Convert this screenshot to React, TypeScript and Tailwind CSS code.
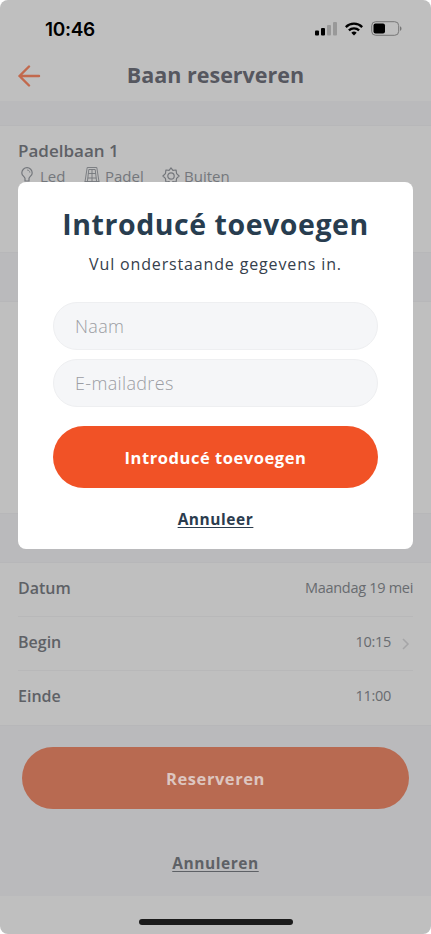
import React from 'react';

const rows = [
  { label: 'Datum', value: 'Maandag 19 mei', inset: false, chevron: false },
  { label: 'Begin', value: '10:15', inset: true, chevron: true },
  { label: 'Einde', value: '11:00', inset: true, chevron: false },
];

function BulbIcon() {
  return (
    <svg className="shrink-0" width="12" height="18" viewBox="0 0 12 18" fill="none" stroke="currentColor" strokeWidth="1.200">
      <path d="M4 14V11.300C3.600 9.600.8 8.700.8 5.900a5.200 5.200 0 0 1 10.400 0C11.200 8.700 8.400 9.600 8 11.300V14zM4 16h4" />
      <path d="M6 3c1.700 0 2.800 1.100 2.900 2.700" strokeWidth=".8" />
    </svg>
  );
}

function CourtIcon() {
  return (
    <svg className="shrink-0" width="16" height="18" viewBox="0 0 16 18" fill="none" stroke="currentColor" strokeWidth=".9">
      <path d="M3.200.5h9.600M3.200.5.8 16M12.800.5 15.200 16M4.800 2.500h6.400M4.800 2.500 3.400 14.500M11.200 2.500l1.400 12M8 2.500v12M4.300 6.500h7.400M3.800 11h8.400M.8 14.500h14.400" />
    </svg>
  );
}

function GearIcon() {
  return (
    <svg className="shrink-0" width="18" height="18" viewBox="0 0 18 18" fill="none" stroke="currentColor" strokeWidth="1.200" strokeLinejoin="round">
      <path d="M9 .9 10.900 3.400 14.100 3 14.600 6.600 17.100 9 14.600 11.400 14.100 15 10.900 14.600 9 17.100 7.100 14.600 3.900 15 3.400 11.400.9 9 3.400 6.600 3.900 3 7.100 3.400z" />
      <circle cx="9" cy="9" r="3.200" />
    </svg>
  );
}

function StatusBar() {
  return (
    <div className="flex h-[57px] items-center justify-between pl-[45px] pr-[29px]">
      <span className="mt-[3px] font-[Inter] text-[19px] font-semibold tracking-[-0.300px] text-black">10:46</span>
      <div className="flex items-center">
        <svg width="22" height="14" viewBox="0 0 22 14">
          <rect x="0" y="8.500" width="4" height="5" rx="1" />
          <rect x="6" y="6" width="4" height="7.500" rx="1" />
          <rect x="12" y="3" width="4" height="10.500" rx="1" fill="#999999" />
          <rect x="18" y="0" width="4" height="13.500" rx="1" fill="#999999" />
        </svg>
        <svg className="ml-2" width="18" height="14" viewBox="0 0 18 14" fill="none" stroke="black" strokeWidth="2.300">
          <path d="M.8 5.100a11.600 11.600 0 0 1 16.400 0M3.900 8.400a7.200 7.200 0 0 1 10.200 0" />
          <path d="M9 13.500 6.300 10.800a3.800 3.800 0 0 1 5.400 0z" fill="black" stroke="none" />
        </svg>
        <svg className="ml-2" width="31" height="15" viewBox="0 0 31 15" fill="none">
          <rect x=".7" y=".7" width="27" height="13.600" rx="4" stroke="#777777" strokeWidth="1" />
          <rect x="2.500" y="2.500" width="11.500" height="10" rx="2" fill="black" />
          <path d="M29 5.200c2 .8 2 3.800 0 4.600z" fill="#777777" />
        </svg>
      </div>
    </div>
  );
}

function GuestModal() {
  return (
    <div className="absolute left-[18px] top-[182px] flex h-[367px] w-[395px] flex-col items-center rounded-[8px] bg-white px-[35px] text-[#2b3c4e]">
      <h2 className="mt-[22px] whitespace-nowrap text-[28.500px] font-bold leading-[40px] tracking-[0.550px] text-[#283d4f]">Introducé toevoegen</h2>
      <p className="mt-[8px] whitespace-nowrap text-[16px] leading-[24px] tracking-[0.850px] text-[#35404c]">Vul onderstaande gegevens in.</p>
      <div className="mt-[26px] flex w-full flex-col gap-[9px]">
        <input
          className="h-12 w-full rounded-full border border-[#eeeff1] bg-[#f5f6f8] px-[21px] text-[18px] font-light tracking-[0.350px] placeholder:text-[#9b9da3]"
          placeholder="Naam"
        />
        <input
          className="h-12 w-full rounded-full border border-[#eeeff1] bg-[#f5f6f8] px-[21px] text-[18px] font-light tracking-[0.350px] placeholder:text-[#9b9da3]"
          placeholder="E-mailadres"
        />
      </div>
      <button className="mt-[19px] h-[62px] w-full rounded-full bg-[#f15226] pt-[2px] text-[16.500px] font-bold tracking-[0.550px] text-white">
        Introducé toevoegen
      </button>
      <button className="mt-[20px] text-[15.500px] font-bold leading-[22px] tracking-[0.550px] underline underline-offset-2">Annuleer</button>
    </div>
  );
}

export default function App() {
  return (
    <div className="h-[934px] w-[431px] overflow-hidden bg-white font-['Open_Sans',sans-serif]">
      <div className="relative flex h-full flex-col overflow-hidden rounded-[8px] bg-[#bfbfbf] text-[#5e6166]">
        <StatusBar />
        <header className="flex h-[44px] shrink-0 items-center pl-[18px]">
          <svg className="mt-[-7px]" width="23" height="22" viewBox="0 0 23 22" fill="none" stroke="#c2694d" strokeWidth="2.400" strokeLinecap="round" strokeLinejoin="round">
            <path d="M21 11H1.500M11 1.500 1.500 11l9.500 9.500" />
          </svg>
          <h1 className="mt-[-9px] flex-1 pr-[41px] text-center text-[21.500px] font-bold leading-[30px] text-[#56575f]">Baan reserveren</h1>
        </header>
        <div className="h-[25px] shrink-0 border-b border-[#b7b7b9] bg-[#bababc]" />
        <section className="h-[126px] shrink-0 px-[18px] pt-[13px]">
          <h3 className="text-[17px] font-semibold leading-[24px]">Padelbaan 1</h3>
          <div className="mt-[2px] flex items-center text-[15px] leading-[22px] text-[#74777c]">
            <span className="ml-[3px] flex w-[63px] items-center gap-[7px]"><BulbIcon />Led</span>
            <span className="flex w-[78px] items-center gap-[5px]"><CourtIcon />Padel</span>
            <span className="flex items-center gap-[4px]"><GearIcon />Buiten</span>
          </div>
        </section>
        <div className="h-[50px] shrink-0 border-y border-[#b7b7b9] bg-[#bababc]" />
        <div className="h-[211px] shrink-0" />
        <div className="h-[50px] shrink-0 border-y border-[#b7b7b9] bg-[#bababc]" />
        <section className="h-[162px] shrink-0 px-[18px]">
          {rows.map((row) => (
            <div key={row.label} className="flex h-[54px] items-center justify-between border-b border-[#b8b8b9] pb-[4px] last:border-0">
              <span className="text-[16px] font-semibold">{row.label}</span>
              <div className="flex items-center text-[14.500px] tracking-[-0.300px] text-[#686b6f]">
                <span>{row.value}</span>
                {row.inset && (
                  <svg className="mt-[4px] ml-[10px] mr-[3px]" width="9" height="12" viewBox="0 0 9 12" fill="none" stroke="#a5a5a7" strokeWidth="1.500">
                    {row.chevron && <path d="m2 1 5 5-5 5" />}
                  </svg>
                )}
              </div>
            </div>
          ))}
        </section>
        <footer className="flex h-[171px] shrink-0 flex-col items-center border-t border-[#b7b7b9] bg-[#bababc] px-[22px] pt-[21px]">
          <button className="h-[62px] w-full rounded-full bg-[#b86a51] pt-[2px] text-[16.500px] font-bold tracking-[0.550px] text-[#ddc6c0]">Reserveren</button>
          <button className="mt-[43px] text-[15.500px] font-bold leading-[22px] tracking-[0.550px] underline underline-offset-2">Annuleren</button>
        </footer>
        <div className="mx-auto mt-[23px] h-[6px] w-[154px] shrink-0 rounded-full bg-[#1b1b1b]" />
        <GuestModal />
      </div>
    </div>
  );
}
